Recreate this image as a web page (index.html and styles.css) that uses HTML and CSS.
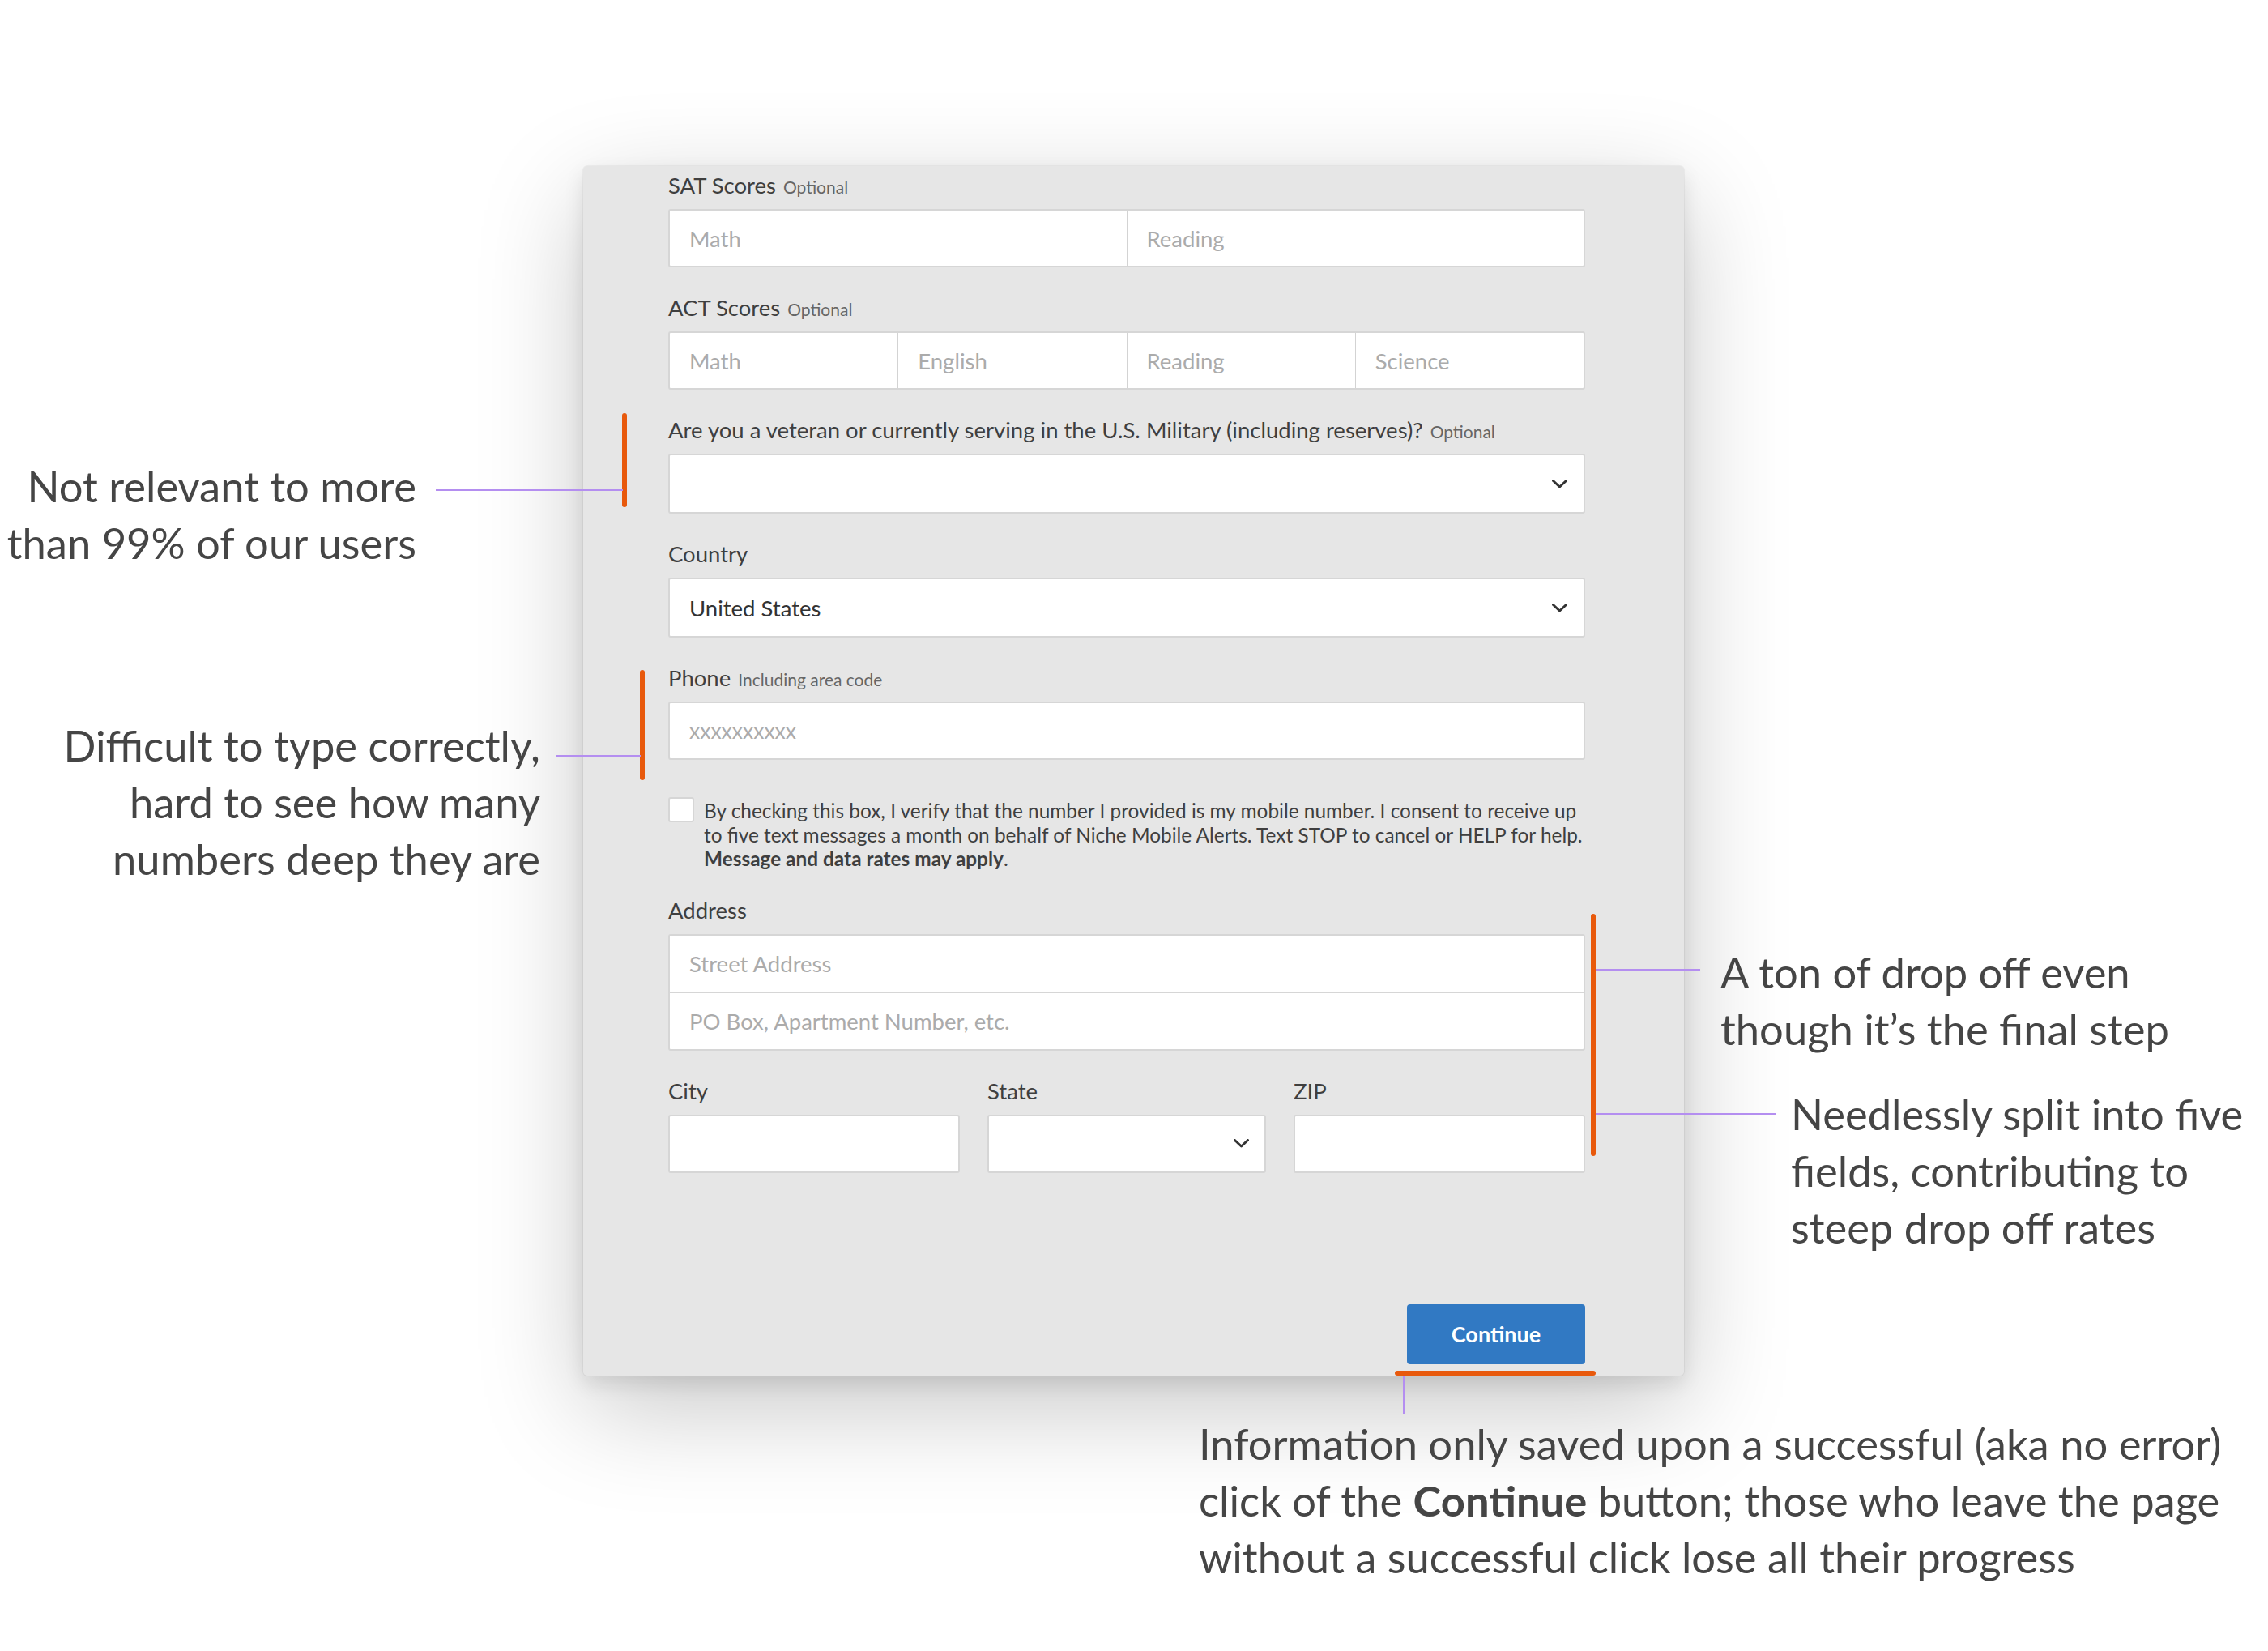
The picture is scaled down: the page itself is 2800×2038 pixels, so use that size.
FILE: index.html
```html
<!DOCTYPE html>
<html lang="en">
<head>
<meta charset="utf-8">
<title>Form annotations</title>
<link rel="stylesheet" href="styles.css">
</head>
<body>
<div class="stage">
  <div class="card">
    <div class="field">
      <div class="label">SAT Scores <span class="opt">Optional</span></div>
      <div class="box row">
        <div class="cell">Math</div>
        <div class="cell">Reading</div>
      </div>
    </div>
    <div class="field">
      <div class="label">ACT Scores <span class="opt">Optional</span></div>
      <div class="box row">
        <div class="cell">Math</div>
        <div class="cell">English</div>
        <div class="cell">Reading</div>
        <div class="cell">Science</div>
      </div>
    </div>
    <div class="field">
      <div class="label">Are you a veteran or currently serving in the U.S. Military (including reserves)? <span class="opt">Optional</span></div>
      <div class="box select">
        <span class="value"></span>
        <svg class="chev" width="19" height="11" viewBox="0 0 19 11"><polyline points="1.5,1.5 9.5,9 17.5,1.5" fill="none" stroke="#333" stroke-width="3" stroke-linecap="round" stroke-linejoin="round"/></svg>
      </div>
    </div>
    <div class="field">
      <div class="label">Country</div>
      <div class="box select">
        <span class="value">United States</span>
        <svg class="chev" width="19" height="11" viewBox="0 0 19 11"><polyline points="1.5,1.5 9.5,9 17.5,1.5" fill="none" stroke="#333" stroke-width="3" stroke-linecap="round" stroke-linejoin="round"/></svg>
      </div>
    </div>
    <div class="field">
      <div class="label">Phone <span class="opt">Including area code</span></div>
      <div class="box input">
        <span class="ph phone">xxxxxxxxxx</span>
      </div>
    </div>
    <div class="consent">
      <span class="check"></span>
      <p class="consent-text">By checking this box, I verify that the number I provided is my mobile number. I consent to receive up<br>to five text messages a month on behalf of Niche Mobile Alerts. Text STOP to cancel or HELP for help.<br><strong>Message and data rates may apply</strong>.</p>
    </div>
    <div class="field">
      <div class="label">Address</div>
      <div class="box stack">
        <div class="line">Street Address</div>
        <div class="line">PO Box, Apartment Number, etc.</div>
      </div>
    </div>
    <div class="trio">
      <div class="col">
        <div class="label">City</div>
        <div class="box input"></div>
      </div>
      <div class="col">
        <div class="label">State</div>
        <div class="box select small">
          <span class="value"></span>
          <svg class="chev" width="19" height="11" viewBox="0 0 19 11"><polyline points="1.5,1.5 9.5,9 17.5,1.5" fill="none" stroke="#333" stroke-width="3" stroke-linecap="round" stroke-linejoin="round"/></svg>
        </div>
      </div>
      <div class="col">
        <div class="label">ZIP</div>
        <div class="box input"></div>
      </div>
    </div>
    <div class="actions">
      <button class="btn" type="button">Continue</button>
    </div>
  </div>

  <span class="bar bar-v1"></span>
  <span class="bar bar-v2"></span>
  <span class="bar bar-v3"></span>
  <span class="bar bar-h1"></span>

  <span class="lead lead-1"></span>
  <span class="lead lead-2"></span>
  <span class="lead lead-3"></span>
  <span class="lead lead-4"></span>
  <span class="lead lead-5"></span>

  <p class="note note-1">Not relevant to more<br>than 99% of our users</p>
  <p class="note note-2">Difficult to type correctly,<br>hard to see how many<br>numbers deep they are</p>
  <p class="note note-3">A ton of drop off even<br>though it’s the final step</p>
  <p class="note note-4">Needlessly split into five<br>fields, contributing to<br>steep drop off rates</p>
  <p class="note note-5">Information only saved upon a successful (aka no error)<br>click of the <strong>Continue</strong> button; those who leave the page<br>without a successful click lose all their progress</p>
</div>
</body>
</html>
```
FILE: styles.css
```css
* { box-sizing: border-box; }
html, body { margin: 0; background: #fff; }
body {
  font-family: Lato, "Noto Sans", sans-serif;
  color: #444;
}
.stage {
  position: relative;
  width: 2800px;
  height: 2038px;
  overflow: hidden;
  padding: 205px 0 0 720px;
}
.card {
  width: 1359px;
  background: #e6e6e6;
  border-radius: 5px;
  padding: 7px 122px 14px 105px;
  box-shadow: 0 40px 130px rgba(0, 0, 0, 0.22), 0 10px 24px rgba(0, 0, 0, 0.10), 0 0 0 1px rgba(0, 0, 0, 0.04);
}
.field { margin-bottom: 33px; }
.label {
  height: 34px;
  line-height: 34px;
  font-size: 27.5px;
  margin-bottom: 12px;
  color: #3f3f3f;
  white-space: nowrap;
}
.opt { font-size: 21px; color: #666; margin-left: 2px; }
.box {
  background: #fff;
  border: 2px solid #d6d6d6;
  border-radius: 3px;
  height: 72px;
}
.row { display: flex; }
.cell {
  flex: 1;
  display: flex;
  align-items: center;
  padding-left: 24px;
  font-size: 27.5px;
  color: #ababab;
}
.cell + .cell { border-left: 1px solid #d3d3d3; }
.select {
  height: 74px;
  display: flex;
  align-items: center;
  justify-content: space-between;
  padding: 0 20px 0 24px;
  font-size: 27.5px;
  color: #333;
}
.select.small { height: 72px; padding-right: 19px; }
.chev { display: block; }
.input {
  display: flex;
  align-items: center;
  padding-left: 24px;
}
.ph { font-size: 27.5px; color: #ababab; }
.ph.phone { font-size: 26.5px; }
.consent {
  display: flex;
  gap: 12px;
  margin-top: 46px;
  margin-bottom: 32px;
}
.check {
  flex: none;
  width: 32px;
  height: 31px;
  background: #fff;
  border: 2px solid #d6d6d6;
  border-radius: 3px;
}
.consent-text {
  margin: 2px 0 0;
  font-size: 24.4px;
  line-height: 29.5px;
  color: #3f3f3f;
  white-space: nowrap;
}
.consent-text strong { font-weight: 700; }
.stack {
  height: 144px;
  display: flex;
  flex-direction: column;
}
.line {
  flex: 1;
  display: flex;
  align-items: center;
  padding-left: 24px;
  font-size: 27.5px;
  color: #ababab;
}
.line + .line { border-top: 2px solid #d6d6d6; }
.trio {
  display: grid;
  grid-template-columns: 360px 344px 360px;
  column-gap: 34px;
}
.actions {
  display: flex;
  justify-content: flex-end;
  margin-top: 162px;
}
.btn {
  width: 220px;
  height: 74px;
  border: none;
  border-radius: 4px;
  background: #3179c3;
  color: #fff;
  font-family: Lato, "Noto Sans", sans-serif;
  font-size: 27px;
  font-weight: 700;
}

.bar {
  position: absolute;
  background: #e8590c;
  border-radius: 3px;
}
.bar-v1 { left: 768px; top: 510px; width: 6px; height: 116px; }
.bar-v2 { left: 790px; top: 827px; width: 6px; height: 136px; }
.bar-v3 { left: 1964px; top: 1128px; width: 6px; height: 299px; }
.bar-h1 { left: 1722px; top: 1692px; width: 248px; height: 6px; }

.lead { position: absolute; background: #b48ef0; }
.lead-1 { left: 538px; top: 604px; width: 231px; height: 2px; }
.lead-2 { left: 686px; top: 932px; width: 105px; height: 2px; }
.lead-3 { left: 1970px; top: 1196px; width: 129px; height: 2px; }
.lead-4 { left: 1970px; top: 1374px; width: 223px; height: 2px; }
.lead-5 { left: 1732px; top: 1698px; width: 2px; height: 48px; }

.note {
  position: absolute;
  margin: 0;
  font-size: 52.5px;
  line-height: 70px;
  color: #454545;
  white-space: nowrap;
}
.note strong { font-weight: 700; }
.note-1 { right: 2286px; top: 565px; text-align: right; }
.note-2 { right: 2133px; top: 885px; text-align: right; }
.note-3 { left: 2124px; top: 1165px; }
.note-4 { left: 2211px; top: 1340px; }
.note-5 { left: 1480px; top: 1747px; }
```
